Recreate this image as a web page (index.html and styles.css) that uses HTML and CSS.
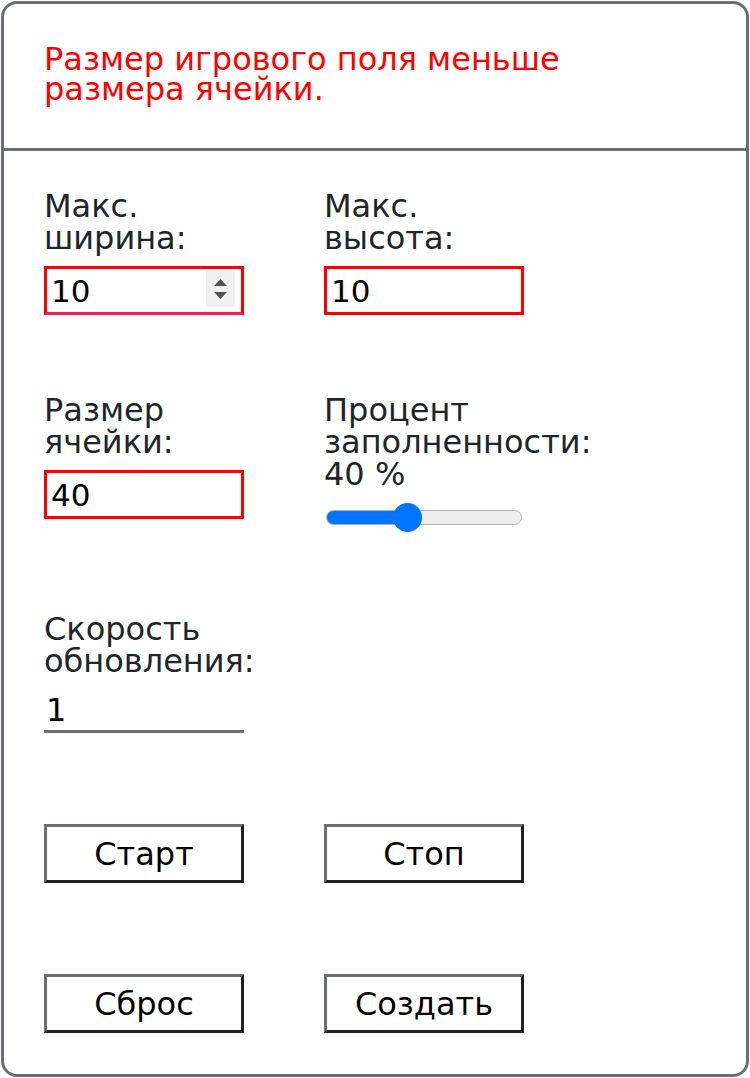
FILE: index.html
```html
<!DOCTYPE html>
<html lang="ru">
<head>
<meta charset="utf-8">
<link rel="stylesheet" href="styles.css">
</head>
<body>
<div class="panel">
  <div class="header">
    <p class="error">Размер игрового поля меньше<br>размера ячейки.</p>
  </div>
  <div class="content">
    <div class="row row-first">
      <div class="field">
        <label class="label">Макс.<br>ширина:</label>
        <div class="input-wrap">
          <input class="box-input invalid focused" type="text" value="10">
          <span class="spinner">
            <svg width="29" height="36" viewBox="0 0 29 36"><path d="M8 15 L14.5 8 L21 15 Z" fill="#505050"/><path d="M8 21 L14.5 28 L21 21 Z" fill="#505050"/></svg>
          </span>
        </div>
      </div>
      <div class="field">
        <label class="label">Макс.<br>высота:</label>
        <input class="box-input invalid" type="text" value="10">
      </div>
    </div>
    <div class="row row-second">
      <div class="field">
        <label class="label">Размер<br>ячейки:</label>
        <input class="box-input invalid" type="text" value="40">
      </div>
      <div class="field">
        <label class="label">Процент<br>заполненности:<br>40 %</label>
        <input class="range" type="range" min="0" max="100" value="40">
      </div>
    </div>
    <div class="row row-third">
      <div class="field">
        <label class="label">Скорость<br>обновления:</label>
        <input class="line-input" type="text" value="1">
      </div>
    </div>
    <div class="row row-buttons">
      <button class="btn">Старт</button>
      <button class="btn">Стоп</button>
    </div>
    <div class="row row-buttons">
      <button class="btn">Сброс</button>
      <button class="btn">Создать</button>
    </div>
  </div>
</div>
</body>
</html>
```

FILE: styles.css
```css
html, body {
  margin: 0;
  padding: 0;
  background: #ffffff;
}

body {
  font-family: "DejaVu Sans", sans-serif;
  font-size: 32px;
}

.panel {
  margin: 1px;
  width: 748px;
  height: 1076px;
  box-sizing: border-box;
  border: 3px solid #6c6e76;
  border-radius: 16px;
  overflow: hidden;
  background: #ffffff;
}

.header {
  height: 147px;
  box-sizing: border-box;
  border-bottom: 3px solid #6c6e76;
  padding: 40px 40px 0 40px;
}

.error {
  margin: 0;
  color: #ff0000;
  font-size: 32px;
  line-height: 30px;
}

.content {
  padding: 39px 40px 0 40px;
}

.row {
  display: grid;
  grid-template-columns: 200px 200px;
  column-gap: 80px;
  align-items: start;
}

.row-second {
  margin-top: 79px;
}

.row-third {
  margin-top: 81px;
}

.row-buttons {
  margin-top: 91px;
}

.field {
  display: flex;
  flex-direction: column;
  gap: 12px;
}

.label {
  color: #212529;
  font-size: 32px;
  line-height: 32px;
}

.input-wrap {
  position: relative;
  width: 200px;
  height: 49px;
}

.box-input {
  width: 200px;
  height: 49px;
  box-sizing: border-box;
  margin: 0;
  padding: 0 0 0 4px;
  border: 3px solid #ff0000;
  outline: none;
  font-family: "DejaVu Sans", sans-serif;
  font-size: 31px;
  color: #000000;
  background: #ffffff;
}

.box-input.focused {
  border-bottom-color: #ff1a52;
}

.spinner {
  position: absolute;
  left: 162px;
  top: 5px;
  width: 29px;
  height: 36px;
  background: #f0f0f0;
  display: block;
}

.spinner svg {
  display: block;
}

.range {
  -webkit-appearance: none;
  appearance: none;
  width: 196px;
  height: 30px;
  margin: 0 0 0 2px;
  padding: 0;
  background: transparent;
}

.range::-webkit-slider-runnable-track {
  height: 15px;
  box-sizing: border-box;
  border: 1px solid #b2b2b2;
  border-radius: 8px;
  background: linear-gradient(to right, #0075ff 0, #0075ff 42%, #efefef 42%, #efefef 100%);
}

.range::-webkit-slider-thumb {
  -webkit-appearance: none;
  appearance: none;
  width: 29px;
  height: 29px;
  border-radius: 50%;
  background: #0075ff;
  border: none;
  margin-top: -8px;
}

.line-input {
  width: 200px;
  height: 44px;
  box-sizing: border-box;
  margin: 0;
  padding: 0 0 0 2px;
  border: none;
  border-bottom: 3px solid #6c6e76;
  outline: none;
  font-family: "DejaVu Sans", sans-serif;
  font-size: 32px;
  color: #000000;
  background: #ffffff;
}

.btn {
  width: 200px;
  height: 59px;
  box-sizing: border-box;
  margin: 0;
  padding: 0;
  background: #ffffff;
  border: 3px solid;
  border-color: #6c6e76 #212121 #212121 #6c6e76;
  font-family: "DejaVu Sans", sans-serif;
  font-size: 32px;
  color: #000000;
}
```
